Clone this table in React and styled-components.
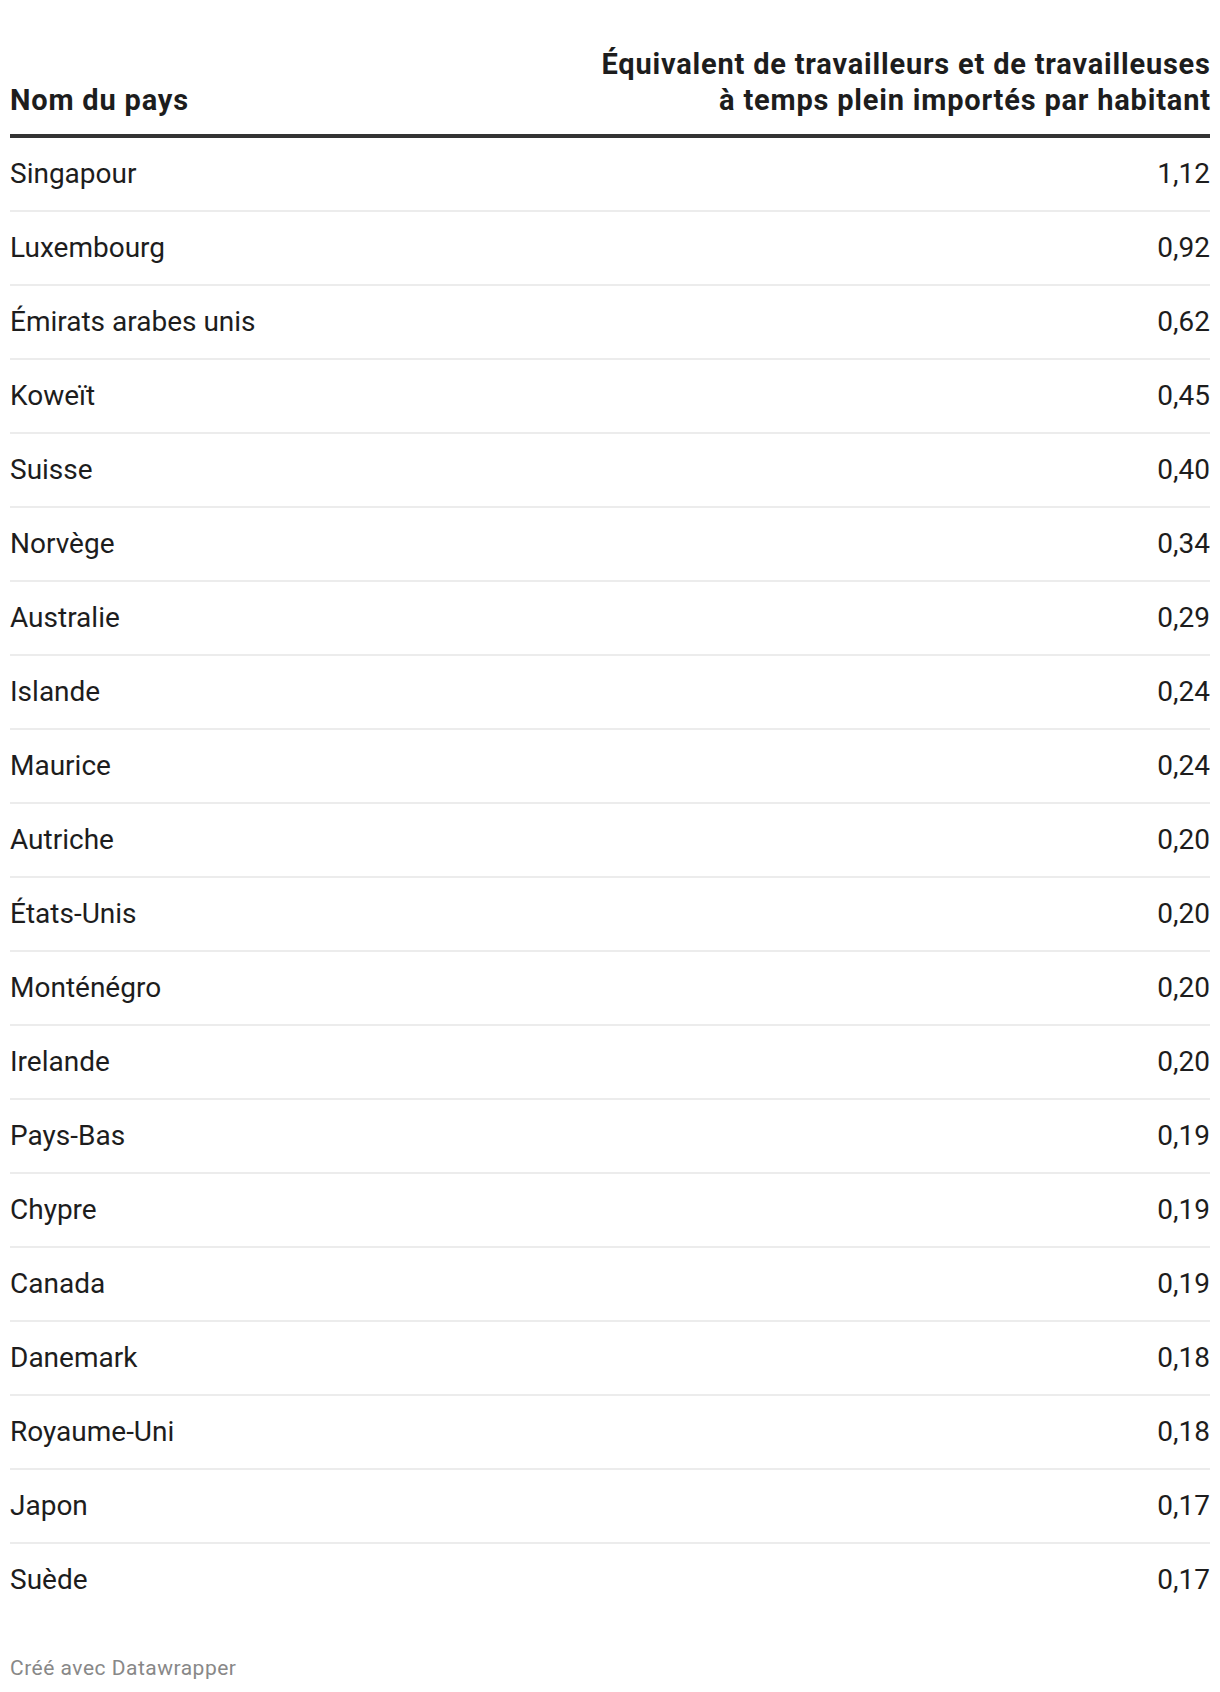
import React from 'react';
import styled, { createGlobalStyle } from 'styled-components';

const rows = [
	['Singapour', '1,12'],
	['Luxembourg', '0,92'],
	['Émirats arabes unis', '0,62'],
	['Koweït', '0,45'],
	['Suisse', '0,40'],
	['Norvège', '0,34'],
	['Australie', '0,29'],
	['Islande', '0,24'],
	['Maurice', '0,24'],
	['Autriche', '0,20'],
	['États-Unis', '0,20'],
	['Monténégro', '0,20'],
	['Irelande', '0,20'],
	['Pays-Bas', '0,19'],
	['Chypre', '0,19'],
	['Canada', '0,19'],
	['Danemark', '0,18'],
	['Royaume-Uni', '0,18'],
	['Japon', '0,17'],
	['Suède', '0,17'],
];

const GlobalStyle = createGlobalStyle`
	body {
		margin: 0;
		background: #fff;
		font-family: Roboto, "Liberation Sans", sans-serif;
		color: #1d1d1d;
	}
`;

const Page = styled.div`
	padding: 46px 10px 0 10px;
`;

const Head = styled.div`
	display: flex;
	justify-content: space-between;
	align-items: flex-end;
	padding-bottom: 16px;
	border-bottom: 4px solid #333;
	font-weight: 700;
	font-size: 29px;
	line-height: 36px;
	letter-spacing: 0.8px;
	color: #1d1d1d;
`;

const HeadCell = styled.div`
	text-align: ${({ $right }) => ($right ? 'right' : 'left')};
	margin-right: ${({ $right }) => ($right ? '-0.8px' : '0')};
`;

const Row = styled.div`
	display: flex;
	justify-content: space-between;
	align-items: center;
	height: 72px;
	font-size: 28px;
	line-height: 34px;
	border-bottom: ${({ $last }) => ($last ? 'none' : '2px solid #ececec')};
`;

const Value = styled.span`
	font-variant-numeric: tabular-nums;
`;

const Footer = styled.div`
	margin-top: 40px;
	font-size: 21px;
	line-height: 24px;
	letter-spacing: 0.5px;
	color: #888;
`;

const App = () => (
	<Page>
		<GlobalStyle />
		<Head>
			<HeadCell>Nom du pays</HeadCell>
			<HeadCell $right>
				Équivalent de travailleurs et de travailleuses
				<br />
				à temps plein importés par habitant
			</HeadCell>
		</Head>
		{rows.map(([name, value], i) => (
			<Row key={name} $last={i === rows.length - 1}>
				<span>{name}</span>
				<Value>{value}</Value>
			</Row>
		))}
		<Footer>Créé avec Datawrapper</Footer>
	</Page>
);

export default App;
